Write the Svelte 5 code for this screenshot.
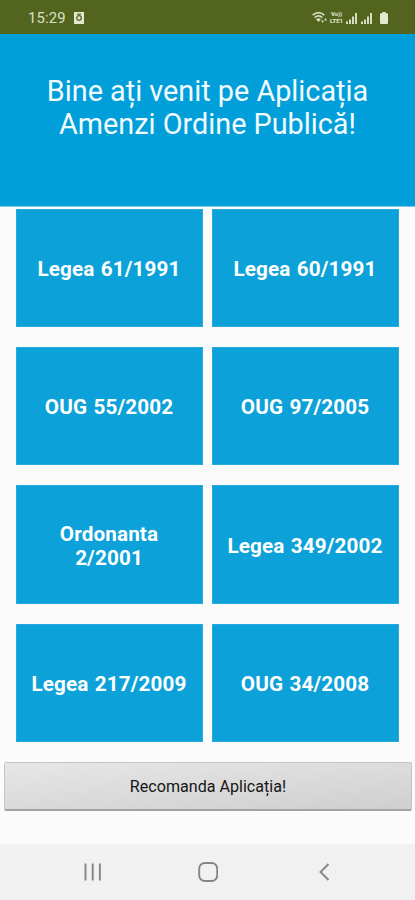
<script>
  const laws = [
    "Legea 61/1991",
    "Legea 60/1991",
    "OUG 55/2002",
    "OUG 97/2005",
    "Ordonanta 2/2001",
    "Legea 349/2002",
    "Legea 217/2009",
    "OUG 34/2008",
  ];
</script>

<div class="screen">
  <div class="status">
    <span class="clock">15:29</span>
    <svg class="app-icon" width="10" height="12" viewBox="0 0 10 12">
      <path fill="#e3e9cf" d="M0 0h10v12H0z" />
      <circle cx="5" cy="6" r="2.3" fill="none" stroke="#53641f" stroke-width="1.3" />
      <path fill="#53641f" d="M3 1.6h4v1.2H3z" />
    </svg>
    <svg class="wifi" width="16" height="13" viewBox="0 0 16 13">
      <g fill="none" stroke="#d5dcbd" stroke-width="1.8">
        <path d="M.7 4.2Q6.5-1 12.3 4.2" />
        <path d="M2.7 6.6Q6.5 3.2 10.3 6.6" />
      </g>
      <path fill="#d5dcbd" d="M4 8.2Q6.5 6.2 9 8.2L6.5 11z" />
      <path fill="#d5dcbd" d="M9 9.6h3L10.5 12zM12 9.4h3L13.5 7z" />
    </svg>
    <div class="volte">
      <span>Vo))</span>
      <span>LTE1</span>
    </div>
    {#each [1, 2] as sim}
      <svg class="signal" width="12" height="12" viewBox="0 0 12 12">
        <path
          fill="#d5dcbd"
          d="M0 9.5h2V12H0zM3 7.500h2V12H3zM6 4.500h2V12H6zM9 1h2v11H9z"
        />
      </svg>
    {/each}
    <svg class="battery" width="8" height="12" viewBox="0 0 8 12">
      <path fill="#e3e9cf" d="M2.3 0h3.4v1.3H7q1 0 1 1V11q0 1-1 1H1q-1 0-1-1V2.3q0-1 1-1h1.3z" />
    </svg>
  </div>

  <header>
    <h1>Bine ați venit pe Aplicația<br />Amenzi Ordine Publică!</h1>
  </header>

  <main>
    {#each laws as law}
      <button class="law"><span>{law}</span></button>
    {/each}
  </main>

  <button class="share">Recomanda Aplicația!</button>

  <nav>
    <svg width="18" height="18" viewBox="0 0 18 18">
      <path d="M1.5 .5v17M8.7 .5v17M15.9 .5v17" />
    </svg>
    <svg width="20" height="20" viewBox="0 0 20 20">
      <rect x="1.2" y="1" width="18" height="18" rx="5.5" />
    </svg>
    <svg width="18" height="18" viewBox="-4 0 18 18">
      <path d="M10.5 1L2.5 9l8 8" />
    </svg>
  </nav>
</div>

<style>
  :global(body) {
    margin: 0;
    background: #fbfbfb;
  }
  .screen {
    display: flex;
    flex-direction: column;
    box-sizing: border-box;
    width: 415px;
    height: 900px;
    background: #fbfbfb;
    font-family: Roboto, "Liberation Sans", sans-serif;
  }
  .status {
    display: flex;
    align-items: center;
    box-sizing: border-box;
    height: 34px;
    padding: 1px 27px 0 28px;
    background: #53641f;
    color: #d9e0c3;
  }
  .clock {
    padding-top: 1px;
    font-size: 14.8px;
    letter-spacing: 0.2px;
    line-height: 18px;
  }
  .app-icon {
    margin-left: 8px;
  }
  .wifi {
    margin-left: auto;
  }
  .volte {
    display: flex;
    flex-direction: column;
    width: 15px;
    margin: 0 2px 0 1px;
    font-size: 5.9px;
    font-weight: 900;
    line-height: 7px;
    text-align: center;
  }
  .signal {
    margin-right: 3px;
  }
  .battery {
    margin-left: 4px;
  }

  header {
    box-sizing: border-box;
    height: 173px;
    padding-top: 41px;
    background: #009fd9;
    border-bottom: 1px solid #7fcbea;
  }
  h1 {
    margin: 0;
    color: #f2fbff;
    font-size: 28.8px;
    font-weight: 400;
    line-height: 33px;
    text-align: center;
  }

  main {
    display: grid;
    grid-template-columns: 187px 187px;
    grid-auto-rows: 118.5px;
    gap: 19.9px 9px;
    padding: 1.6px 16px 0;
  }
  .law {
    display: flex;
    align-items: center;
    justify-content: center;
    margin: 0;
    padding: 2px 21px 0 20px;
    border: 1px solid #26a9dc;
    background: #0ca2d9;
    color: #fff;
    font-family: inherit;
    font-size: 20.7px;
    font-weight: 700;
    letter-spacing: 0.12px;
    line-height: 24px;
    text-align: center;
    word-spacing: 1px;
  }
  .law span {
    margin: 0 -10px;
  }

  .share {
    height: 49px;
    margin: 19.8px 3px 0 4px;
    padding: 1px 0 0;
    border: 1px solid #c4c4c4;
    border-bottom: 2px solid #a2a2a2;
    border-radius: 2px;
    background: linear-gradient(175deg, #e7e7e7, #cfcfcf);
    color: #161616;
    font-family: inherit;
    font-size: 16.1px;
  }

  nav {
    display: flex;
    align-items: center;
    justify-content: space-between;
    box-sizing: border-box;
    height: 56px;
    margin-top: auto;
    padding: 0 83px 0 84px;
    background: #f1f1f1;
  }
  nav svg {
    fill: none;
    stroke: #858585;
    stroke-width: 1.9;
  }
</style>
